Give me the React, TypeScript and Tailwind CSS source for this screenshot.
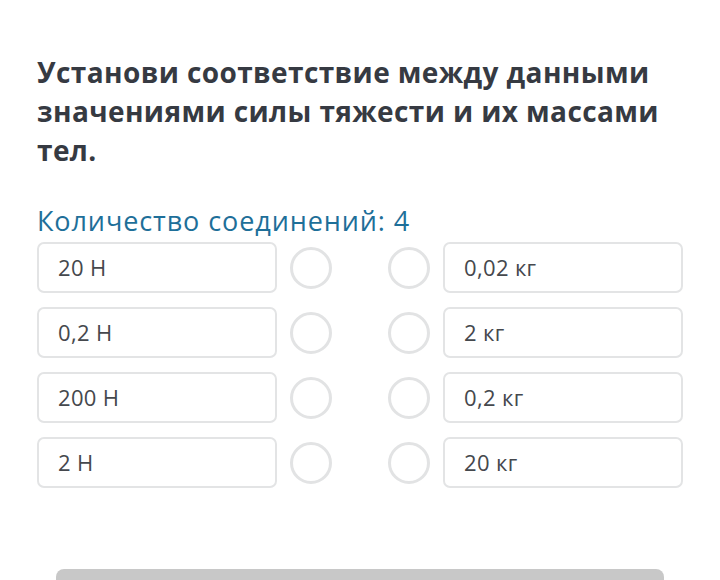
import React from 'react';

const left = ['20 Н', '0,2 Н', '200 Н', '2 Н'];
const right = ['0,02 кг', '2 кг', '0,2 кг', '20 кг'];

const Circle = () => (
  <div className="w-[42px] h-[42px] rounded-full border-[3px] border-[#e2e3e4] bg-white shrink-0" />
);

const Box = ({ text }: { text: string }) => (
  <div className="w-[240px] h-[51px] shrink-0 flex items-center px-[19px] border-2 border-[#e3e4e5] rounded-[7px] text-[22px] tracking-[0.35px] text-[#45484d]">
    {text}
  </div>
);

const App = () => {
  return (
    <div className="w-[720px] h-[580px] overflow-hidden bg-white font-['Open_Sans',sans-serif]">
      <div className="px-[37px] pt-[53px]">
        <h1 className="text-[28px] leading-[39px] font-bold text-[#363a42] tracking-[0.4px]">
          Установи соответствие между данными значениями силы тяжести и их массами тел.
        </h1>
        <div className="mt-[33px] text-[27px] leading-[36px] text-[#1e6f99] tracking-[0.9px]">
          Количество соединений: 4
        </div>
        <div className="mt-[3px] flex flex-col gap-[14px]">
          {left.map((l, i) => (
            <div key={i} className="flex items-center">
              <Box text={l} />
              <div className="ml-[13px]">
                <Circle />
              </div>
              <div className="ml-[56px]">
                <Circle />
              </div>
              <div className="ml-[13px]">
                <Box text={right[i]} />
              </div>
            </div>
          ))}
        </div>
      </div>
      <div className="mx-[56px] mt-[81px] h-[40px] rounded-[8px] bg-[#c8c8c8]" />
    </div>
  );
};

export default App;
